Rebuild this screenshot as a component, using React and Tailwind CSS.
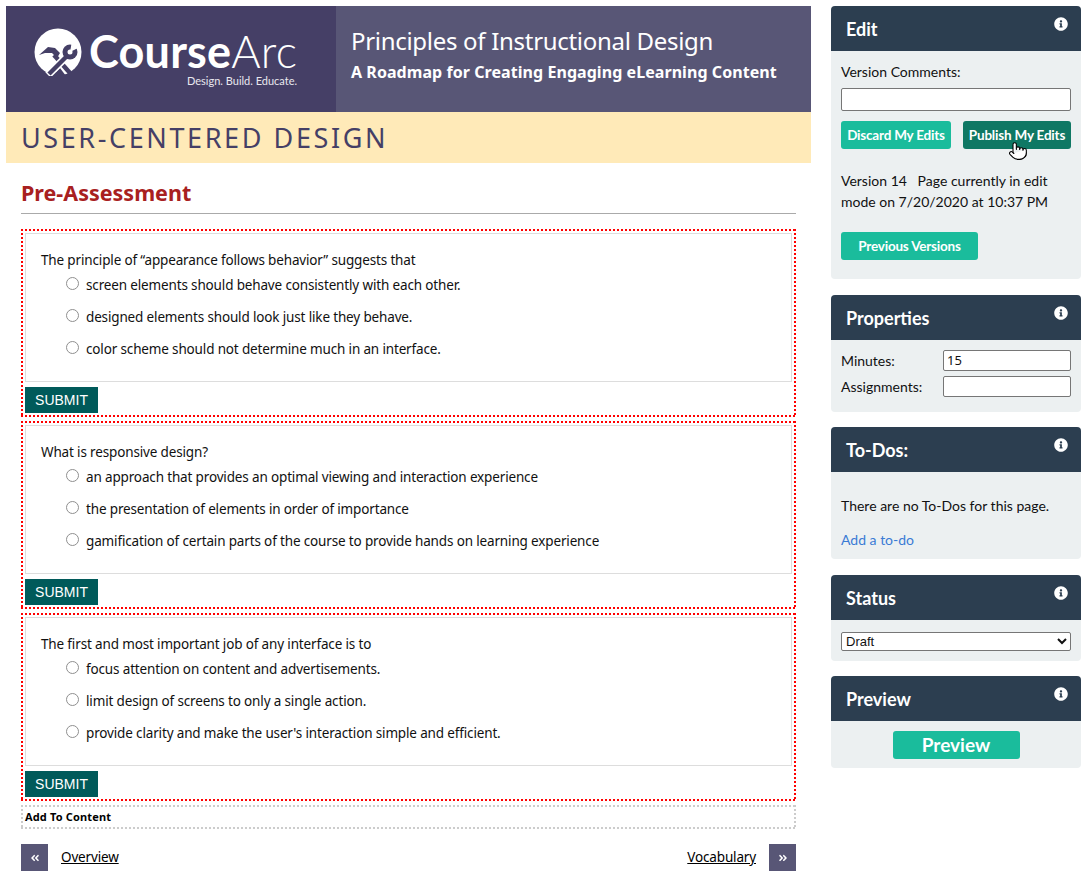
import { FaInfoCircle, FaAngleDoubleLeft, FaAngleDoubleRight } from 'react-icons/fa';
import { Pointer } from 'lucide-react';

const tahoma = 'font-["Noto_Sans",sans-serif]';
const bodyText = 'text-[13.5px] tracking-[-0.15px] leading-[20px] text-[#111111]';

// square 2px dots, the browser's own dotted border comes out too soft at this size
const redDots =
  '[background:linear-gradient(90deg,#f00_50%,transparent_50%)_top_left/4px_2px_repeat-x,linear-gradient(90deg,#f00_50%,transparent_50%)_bottom_left/4px_2px_repeat-x,linear-gradient(#f00_50%,transparent_50%)_top_left/2px_4px_repeat-y,linear-gradient(#f00_50%,transparent_50%)_top_right/2px_4px_repeat-y]';
const grayDots =
  '[background:linear-gradient(90deg,#ccc_50%,transparent_50%)_top_left/4px_2px_repeat-x,linear-gradient(90deg,#ccc_50%,transparent_50%)_bottom_left/4px_2px_repeat-x,linear-gradient(#ccc_50%,transparent_50%)_top_left/2px_4px_repeat-y,linear-gradient(#ccc_50%,transparent_50%)_top_right/2px_4px_repeat-y]';

const questions = [
  {
    text: 'The principle of “appearance follows behavior” suggests that',
    options: [
      'screen elements should behave consistently with each other.',
      'designed elements should look just like they behave.',
      'color scheme should not determine much in an interface.',
    ],
  },
  {
    text: 'What is responsive design?',
    options: [
      'an approach that provides an optimal viewing and interaction experience',
      'the presentation of elements in order of importance',
      'gamification of certain parts of the course to provide hands on learning experience',
    ],
  },
  {
    text: 'The first and most important job of any interface is to',
    options: [
      'focus attention on content and advertisements.',
      'limit design of screens to only a single action.',
      "provide clarity and make the user's interaction simple and efficient.",
    ],
  },
];

function Logo() {
  return (
    <div className="flex items-start pl-[28px] pt-[22px]">
      <svg width="48" height="48" viewBox="0 0 48 48" className="shrink-0">
        <circle cx="24" cy="24" r="23.5" fill="#ffffff" />
        {/* feet of the crossed tools cut out of the circle */}
        <path d="M10 48 L17 40 L22 44 L26 40 L32 48 Z" fill="#453f66" />
        {/* hammer */}
        <path d="M5 27 L14 19 L21 20 L26 25 L23 30 L18 25 L11 25 Z" fill="#453f66" />
        <path d="M20 27 L36 45" stroke="#453f66" strokeWidth="4.5" fill="none" />
        {/* wrench */}
        <path d="M32 29 L14 47" stroke="#ffffff" strokeWidth="7.5" fill="none" />
        <path d="M32 29 L15 46" stroke="#453f66" strokeWidth="4.5" fill="none" />
        <circle cx="36" cy="24" r="7.5" fill="#453f66" />
        <path d="M36 24 L38 13 L46 19 Z" fill="#ffffff" />
        <circle cx="36" cy="24" r="2.5" fill="#ffffff" />
      </svg>
      <div className="ml-[7px] mt-px flex flex-col items-end">
        <div className="font-['Lato',sans-serif] text-[45px] tracking-[0.2px] leading-[44px] text-white whitespace-nowrap">
          <span className="font-bold">Course</span>
          <span className="font-light">Arc</span>
        </div>
        <div className="mt-px font-['Lato',sans-serif] text-[11px] leading-[13px] text-[#e8e7ee] whitespace-nowrap">Design. Build. Educate.</div>
      </div>
    </div>
  );
}

function Question({ text, options }) {
  return (
    <div className={`${redDots} h-[188px] flex flex-col p-[4px] pb-0`}>
      <div className="border border-[#dddddd] h-[149px] pt-[16px] pl-[15px]">
        <div className={bodyText}>{text}</div>
        <div className="flex flex-col gap-[12px] mt-[5px]">
          {options.map((opt) => (
            <label key={opt} className={`flex items-center pl-[25px] h-[20px] ${bodyText}`}>
              <input
                type="radio"
                name={text}
                className="appearance-none w-[13px] h-[13px] m-0 mb-[3px] shrink-0 rounded-full bg-white border border-[#8f8f8f]"
              />
              <span className="ml-[7px] whitespace-nowrap">{opt}</span>
            </label>
          ))}
        </div>
      </div>
      <div className="mt-[5px] flex">
        <button className="h-[26px] w-[73px] bg-[#005a5a] text-white text-[14px] font-['Liberation_Sans',sans-serif]">SUBMIT</button>
      </div>
    </div>
  );
}

function Panel({ title, children, bodyClass }) {
  return (
    <section className="rounded-[4px] overflow-hidden bg-[#ecf0f1]">
      <div className="bg-[#2c3e50] h-[45px] flex justify-between pl-[15px] pr-[13px]">
        <h3 className="font-bold text-[18px] leading-[46px] text-white">{title}</h3>
        <FaInfoCircle className="text-white text-[14px] mt-[11px]" />
      </div>
      <div className={bodyClass}>{children}</div>
    </section>
  );
}

const tealBtn = 'h-[28px] rounded-[3px] bg-[#1abc9c] text-white font-bold text-[13.5px] tracking-[-0.2px]';

export default function App() {
  return (
    <div className="min-h-[877px] bg-white flex pl-[6px] pt-[6px] gap-[20px] overflow-hidden">
      {/* Main Content */}
      <main className={`w-[805px] shrink-0 ${tahoma}`}>
        <header className="flex h-[106px]">
          <div className="w-[330px] shrink-0 bg-[#453f66]">
            <Logo />
          </div>
          <div className="flex-1 bg-[#585676] pl-[15px] pt-[19px] text-white">
            <h1 className="text-[24px] tracking-[-0.3px] leading-[32px]">Principles of Instructional Design</h1>
            <p className="font-bold text-[16px] tracking-[0.06px] leading-[20px] mt-[5px] whitespace-nowrap">A Roadmap for Creating Engaging eLearning Content</p>
          </div>
        </header>
        <div className="h-[51px] bg-[#ffeab8] pl-[15px] text-[27px] leading-[52px] tracking-[2.6px] text-[#453f66]">USER-CENTERED DESIGN</div>

        <div className="pl-[15px] pr-[15px]">
          <h2 className="mt-[17px] h-[34px] border-b border-[#aaaaaa] font-bold text-[21.5px] leading-[26px] text-[#a82020]">Pre-Assessment</h2>
          <div className="mt-[15px] flex flex-col gap-[4px]">
            {questions.map((q) => (
              <Question key={q.text} {...q} />
            ))}
          </div>
          <div className={`${grayDots} mt-[4px] h-[24px] pl-[4px] pt-[3px] text-[11px] tracking-[0.15px] leading-[17px] font-bold text-black`}>Add To Content</div>
          <nav className="mt-[15px] flex items-center justify-between text-[13.5px] tracking-[-0.15px] leading-[24px]">
            <a className="flex items-center gap-[13px] text-black">
              <span className="w-[27px] h-[27px] bg-[#585676] flex items-center justify-center text-white text-[10px]"><FaAngleDoubleLeft /></span>
              <span className="underline mb-[2px]">Overview</span>
            </a>
            <a className="flex items-center gap-[13px] text-black">
              <span className="underline mb-[2px]">Vocabulary</span>
              <span className="w-[27px] h-[27px] bg-[#585676] flex items-center justify-center text-white text-[10px]"><FaAngleDoubleRight /></span>
            </a>
          </nav>
        </div>
      </main>

      {/* Sidebar */}
      <aside className="w-[250px] shrink-0 flex flex-col font-['Lato',sans-serif] text-[14px] text-[#111111]">
        <Panel title="Edit" bodyClass="h-[228px] pl-[10px] pr-[10px] pt-[11px]">
          <div className="leading-[20px]">Version Comments:</div>
          <input className="mt-[6px] block w-[230px] h-[23px] bg-white border border-[#767676] rounded-[2px]" />
          <div className="mt-[10px] flex justify-between relative">
            <button className={`${tealBtn} w-[110px]`}>Discard My Edits</button>
            <button className={`${tealBtn} w-[108px] !bg-[#0f7864]`}>Publish My Edits</button>
            <Pointer className="absolute left-[167px] top-[18px] w-[20px] h-[24px] fill-white text-black" strokeWidth={1.3} />
          </div>
          <p className="mt-[21px] leading-[21px]">Version 14&nbsp;&nbsp; Page currently in edit<br />mode on 7/20/2020 at 10:37 PM</p>
          <button className={`${tealBtn} w-[137px] mt-[20px]`}>Previous Versions</button>
        </Panel>

        <div className="mt-[16px]">
          <Panel title="Properties" bodyClass="h-[72px] pl-[10px] pr-[10px] pt-[10px]">
            <div className="flex items-center justify-between h-[21px]">
              <label>Minutes:</label>
              <input defaultValue="15" className="w-[128px] h-[21px] bg-white border border-[#767676] rounded-[2px] px-[3px] pb-[2px] font-['Noto_Sans',sans-serif] text-[13px]" />
            </div>
            <div className="flex items-center justify-between h-[21px] mt-[5px]">
              <label>Assignments:</label>
              <input className="w-[128px] h-[21px] bg-white border border-[#767676] rounded-[2px]" />
            </div>
          </Panel>
        </div>

        <div className="mt-[15px]">
          <Panel title="To-Dos:" bodyClass="h-[87px] pl-[10px] pr-[10px] pt-[24px]">
            <p className="leading-[20px]">There are no To-Dos for this page.</p>
            <a className="block mt-[14px] leading-[20px] text-[#3a7bd5]">Add a to-do</a>
          </Panel>
        </div>

        <div className="mt-[16px]">
          <Panel title="Status" bodyClass="h-[41px] pl-[10px] pr-[10px] pt-[12px]">
            <select defaultValue="Draft" className="block w-[230px] h-[19px] bg-white border border-[#767676] rounded-[2px] py-0 text-[13px] font-['Liberation_Sans',sans-serif]">
              <option>Draft</option>
            </select>
          </Panel>
        </div>

        <div className="mt-[15px]">
          <Panel title="Preview" bodyClass="h-[47px] flex justify-center pt-[10px]">
            <button className="w-[127px] h-[28px] rounded-[3px] bg-[#1abc9c] text-white font-bold text-[19px] leading-[28px]">Preview</button>
          </Panel>
        </div>
      </aside>
    </div>
  );
}
